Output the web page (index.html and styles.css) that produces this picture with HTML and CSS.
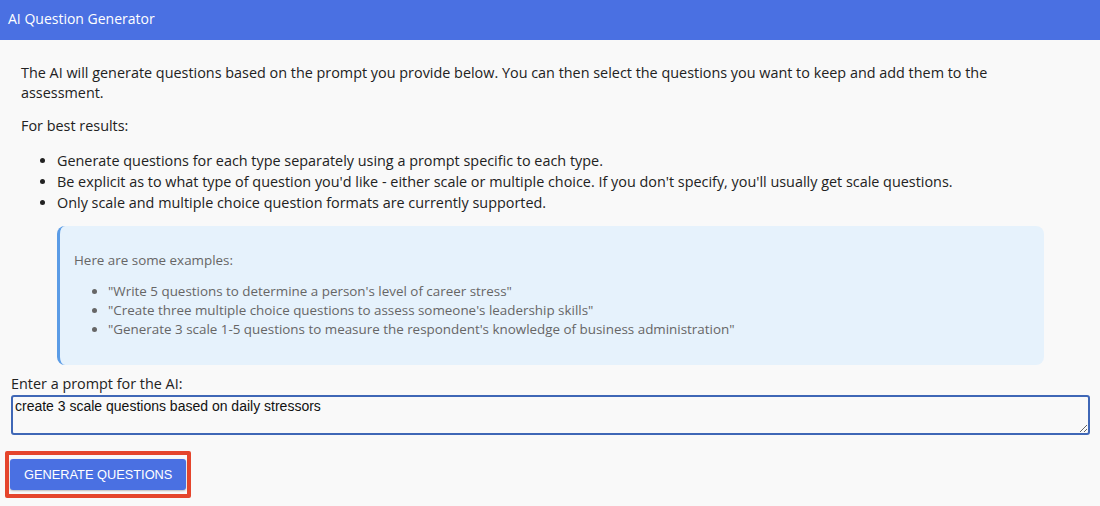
FILE: index.html
```html
<!DOCTYPE html>
<html lang="en">
<head>
  <meta charset="UTF-8">
  <meta name="viewport" content="width=device-width, initial-scale=1.0">
  <title>AI Question Generator</title>
  <link rel="stylesheet" href="styles.css">
</head>
<body>
  <div class="header">AI Question Generator</div>

  <div class="intro">
    <p class="lead">The AI will generate questions based on the prompt you provide below. You can then select the questions you want to keep and add them to the assessment.</p>
    <p class="lead">For best results:</p>
    <ul class="tips">
      <li>Generate questions for each type separately using a prompt specific to each type.</li>
      <li>Be explicit as to what type of question you'd like - either scale or multiple choice. If you don't specify, you'll usually get scale questions.</li>
      <li>Only scale and multiple choice question formats are currently supported.</li>
    </ul>
    <div class="examples">
      <p>Here are some examples:</p>
      <ul>
        <li>"Write 5 questions to determine a person's level of career stress"</li>
        <li>"Create three multiple choice questions to assess someone's leadership skills"</li>
        <li>"Generate 3 scale 1-5 questions to measure the respondent's knowledge of business administration"</li>
      </ul>
    </div>
  </div>

  <div class="prompt">
    <label class="prompt-label" for="prompt-input">Enter a prompt for the AI:</label>
    <textarea id="prompt-input" class="prompt-input">create 3 scale questions based on daily stressors</textarea>
    <div class="actions">
      <span class="highlight">
        <button class="button">Generate Questions</button>
      </span>
    </div>
  </div>
</body>
</html>
```

FILE: styles.css
```css
html, body {
  margin: 0;
  padding: 0;
  background-color: #f9f9f9;
  font-family: 'Open Sans', sans-serif;
  color: #222;
}
.header {
  height: 40px;
  line-height: 38px;
  padding: 0 8px;
  background-color: #4a70e2;
  color: #fff;
  font-size: 14px;
}
.intro {
  padding: 0 56px 0 21px;
}
.lead {
  font-size: 14.4px;
  line-height: 20px;
  margin: 23px 0 13px;
}
.lead + .lead {
  margin-top: 0;
}
.tips {
  font-size: 14.4px;
  line-height: 21px;
  margin: 14px 0 13px;
  padding-left: 36px;
}
.examples {
  margin: 0 0 0 36px;
  padding: 25px 16px 26px 14px;
  background-color: #e6f2fc;
  border-left: 3px solid #5b9ce6;
  border-radius: 8px;
  color: #666;
  font-size: 13.4px;
  line-height: 19px;
}
.examples p {
  margin: 0 0 12px;
}
.examples ul {
  margin: 0;
  padding-left: 34px;
}
.prompt {
  padding: 8px 10px 0 11px;
}
.prompt-label {
  display: block;
  font-size: 14.4px;
  line-height: 20px;
  margin-top: 1px;
}
.prompt-input {
  display: block;
  box-sizing: border-box;
  width: 100%;
  height: 40px;
  margin: 1px 0 0;
  padding: 1px 2px;
  border: 2px solid #3f67b6;
  border-radius: 3px;
  background-color: #f9f9f9;
  font-family: 'Liberation Sans', Arial, sans-serif;
  font-size: 14px;
  color: #111;
}
.actions {
  margin-top: 16px;
}
.highlight {
  display: inline-block;
  margin-left: -6px;
  padding: 4px 1px;
  border: 4px solid #e5452c;
  border-radius: 2px;
}
.button {
  display: block;
  height: 31px;
  padding: 0 14px;
  border: none;
  border-radius: 3px;
  background-color: #4a70e2;
  color: #fff;
  font-family: 'Liberation Sans', Arial, sans-serif;
  font-size: 12.8px;
  text-transform: uppercase;
  box-shadow: 0 1px 2px rgba(0, 0, 0, 0.25);
  cursor: pointer;
}
```
